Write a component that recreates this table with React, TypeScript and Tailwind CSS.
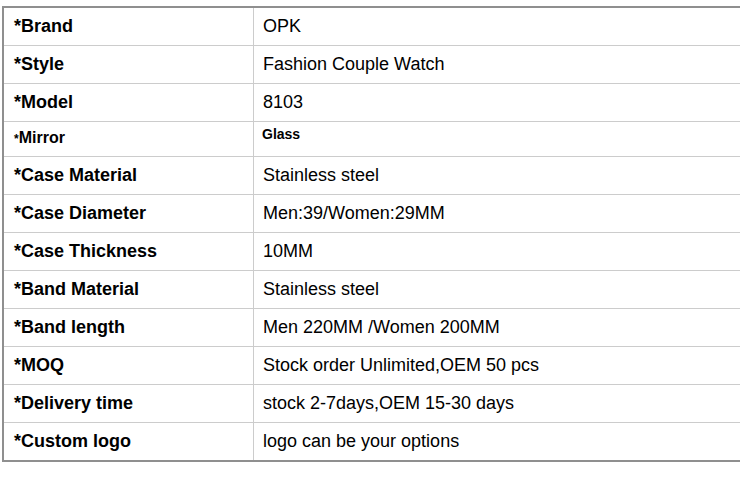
import React from "react";

const rows: { label: string; value: string; mirror?: boolean }[] = [
  { label: "Brand", value: "OPK" },
  { label: "Style", value: "Fashion Couple Watch" },
  { label: "Model", value: "8103" },
  { label: "Mirror", value: "Glass", mirror: true },
  { label: "Case Material", value: "Stainless steel" },
  { label: "Case Diameter", value: "Men:39/Women:29MM" },
  { label: "Case Thickness", value: "10MM" },
  { label: "Band Material", value: "Stainless steel" },
  { label: "Band length", value: "Men 220MM /Women 200MM" },
  { label: "MOQ", value: "Stock order Unlimited,OEM 50 pcs" },
  { label: "Delivery time", value: "stock 2-7days,OEM 15-30 days" },
  { label: "Custom logo", value: "logo can be your options" },
];

export default function App() {
  return (
    <div
      className="w-[740px] h-[478px] overflow-hidden bg-white text-black pt-[6px] pl-[2px]"
      style={{ fontFamily: '"Liberation Sans", Arial, sans-serif' }}
    >
      <div className="border-t-2 border-b-2 border-l-2 border-[#8f8f8f]">
        {rows.map((r, i) => {
          const last = i === rows.length - 1;
          return (
            <div
              key={r.label}
              className={
                "flex " +
                (r.mirror ? "h-[35px] " : last ? "h-[37px] " : "h-[38px] ") +
                (last ? "" : "border-b border-[#cccccc]")
              }
            >
              <div className="w-[250px] shrink-0 border-r border-[#cccccc] flex items-center pl-[10px] font-bold">
                {r.mirror ? (
                  <span className="text-[16px] leading-[18px] mt-[-2px]">
                    <span className="text-[12px]">*</span>
                    {r.label}
                  </span>
                ) : (
                  <span className="text-[18px]">*{r.label}</span>
                )}
              </div>
              {r.mirror ? (
                <div className="flex-1 pl-[8px] pt-[4px] text-[14px] font-bold leading-[16px]">
                  {r.value}
                </div>
              ) : (
                <div className="flex-1 flex items-center pl-[9px] text-[18px]">
                  {r.value}
                </div>
              )}
            </div>
          );
        })}
      </div>
    </div>
  );
}
